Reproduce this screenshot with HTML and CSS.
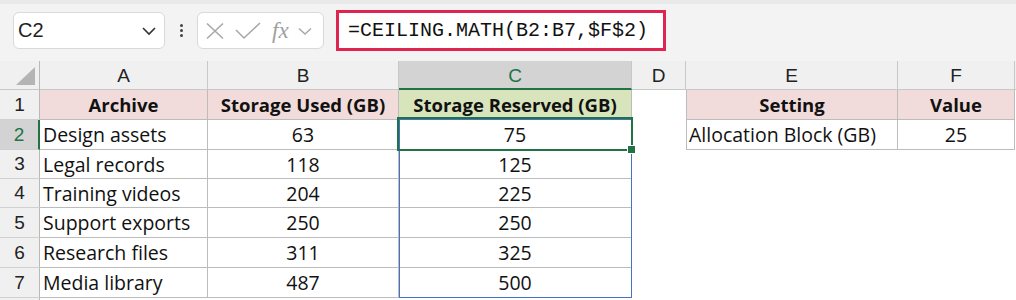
FILE: index.html
```html
<!DOCTYPE html>
<html>
<head>
<meta charset="utf-8">
<link rel="stylesheet" href="styles.css">
</head>
<body>
<div class="toolbar">
  <div class="namebox">
    <span class="ref">C2</span>
    <svg class="chev" width="16" height="10" viewBox="0 0 16 10"><path d="M2 2 L8 8 L14 2" fill="none" stroke="#333" stroke-width="1.6"/></svg>
  </div>
  <div class="dots"><i></i><i></i><i></i></div>
  <div class="fxbox">
    <svg width="20" height="18" viewBox="0 0 20 18"><path d="M2 1.5 L18 16.5 M18 1.5 L2 16.5" stroke="#a8a8a8" stroke-width="1.6" fill="none"/></svg>
    <svg width="26" height="18" viewBox="0 0 26 18"><path d="M1 8 L9 16 L25 1" stroke="#a8a8a8" stroke-width="1.6" fill="none"/></svg>
    <span class="fx">fx</span>
    <svg width="14" height="8" viewBox="0 0 14 8"><path d="M1 1.5 L7 7 L13 1.5" stroke="#a8a8a8" stroke-width="1.5" fill="none"/></svg>
  </div>
  <div class="formula">=CEILING.MATH(B2:B7,$F$2)</div>
</div>
<div class="sheet">
  <div class="corner"><span class="tri"></span></div>
  <div class="ch">A</div><div class="ch">B</div><div class="ch sel">C</div><div class="ch">D</div><div class="ch">E</div><div class="ch">F</div><div class="ch last"></div>

  <div class="rh">1</div>
  <div class="c hd pink">Archive</div><div class="c hd pink">Storage Used (GB)</div><div class="c hd green">Storage Reserved (GB)</div><div class="e"></div><div class="c hd pink eleft">Setting</div><div class="c hd pink">Value</div><div class="e"></div>

  <div class="rh sel">2</div>
  <div class="c">Design assets</div><div class="c n">63</div><div class="c n">75</div><div class="e"></div><div class="c eleft">Allocation Block (GB)</div><div class="c n">25</div><div class="e"></div>

  <div class="rh">3</div>
  <div class="c">Legal records</div><div class="c n">118</div><div class="c n">125</div><div class="e"></div><div class="e"></div><div class="e"></div><div class="e"></div>

  <div class="rh">4</div>
  <div class="c">Training videos</div><div class="c n">204</div><div class="c n">225</div><div class="e"></div><div class="e"></div><div class="e"></div><div class="e"></div>

  <div class="rh">5</div>
  <div class="c">Support exports</div><div class="c n">250</div><div class="c n">250</div><div class="e"></div><div class="e"></div><div class="e"></div><div class="e"></div>

  <div class="rh">6</div>
  <div class="c">Research files</div><div class="c n">311</div><div class="c n">325</div><div class="e"></div><div class="e"></div><div class="e"></div><div class="e"></div>

  <div class="rh">7</div>
  <div class="c">Media library</div><div class="c n">487</div><div class="c n">500</div><div class="e"></div><div class="e"></div><div class="e"></div><div class="e"></div>

  <div class="rh stub"></div>

  <div class="range"></div>
  <div class="active"><span class="handle"></span></div>
</div>
</body>
</html>
```

FILE: styles.css
```css
html, body {
  margin: 0;
  padding: 0;
  background: #ffffff;
  overflow: hidden;
}
body {
  width: 1016px;
  height: 300px;
  font-family: "Open Sans", "Liberation Sans", sans-serif;
}
.toolbar {
  height: 61px;
  box-sizing: border-box;
  background: #f3f3f3;
  border-top: 4px solid #e9e9e9;
  display: flex;
  align-items: center;
  padding-left: 13px;
}
.namebox {
  width: 152px;
  height: 37px;
  box-sizing: border-box;
  background: #fff;
  border: 1px solid #d9d9d9;
  border-radius: 6px;
  display: flex;
  align-items: center;
  justify-content: space-between;
  padding: 0 7px 0 4px;
  margin-top: -4px;
}
.ref {
  font-family: "Liberation Sans", sans-serif;
  font-size: 20px;
  color: #222;
}
.dots {
  width: 32px;
  display: flex;
  flex-direction: column;
  align-items: center;
  gap: 2px;
  margin-top: -4px;
}
.dots i {
  width: 3px;
  height: 3px;
  border-radius: 50%;
  background: #444;
  display: block;
}
.fxbox {
  width: 127px;
  height: 37px;
  box-sizing: border-box;
  background: #fff;
  border: 1px solid #d9d9d9;
  border-radius: 6px;
  display: flex;
  align-items: center;
  padding-left: 7px;
  gap: 12px;
  margin-top: -4px;
}
.fxbox svg:nth-child(2) { margin-left: -2px; }
.fx {
  font-family: "Liberation Serif", serif;
  font-style: italic;
  font-size: 23px;
  color: #a0a0a0;
  margin-left: -1px;
  margin-right: -3px;
}
.formula {
  margin-left: 12px;
  width: 330px;
  height: 41px;
  box-sizing: border-box;
  border: 3px solid #e0234f;
  background: #fff;
  font-family: "Liberation Mono", monospace;
  font-size: 20px;
  color: #111;
  display: flex;
  align-items: center;
  padding-left: 9px;
  margin-top: -4px;
}
.sheet {
  position: relative;
  display: grid;
  grid-template-columns: 40px 168px 191px 233px 54px 212px 117px 1fr;
  grid-template-rows: 29px 30px 30px 29px 29px 30px 30px 30px 3px;
  font-size: 19.5px;
  color: #111;
  height: 239px;
  overflow: hidden;
}
.corner {
  background: #f0f0f0;
  border-right: 1px solid #b9b9b9;
  border-bottom: 1px solid #c8c8c8;
  box-sizing: border-box;
  position: relative;
}
.tri {
  position: absolute;
  right: 4px;
  bottom: 4px;
  width: 0;
  height: 0;
  border-left: 19px solid transparent;
  border-bottom: 18px solid #b4b4b4;
}
.ch {
  background: #f0f0f0;
  border-right: 1px solid #c8c8c8;
  border-bottom: 1px solid #c8c8c8;
  box-sizing: border-box;
  display: flex;
  align-items: center;
  justify-content: center;
  font-family: "Liberation Sans", sans-serif;
  font-size: 19px;
  color: #222;
  padding-top: 2px;
}
.ch.last { border-right: none; }
.ch.sel {
  background: #d3d3d3;
  color: #217346;
  border-bottom: 2px solid #217346;
  padding-top: 3px;
}
.rh {
  background: #f0f0f0;
  border-right: 1px solid #b9b9b9;
  border-bottom: 1px solid #d0d0d0;
  box-sizing: border-box;
  display: flex;
  align-items: center;
  justify-content: center;
  font-family: "Liberation Sans", sans-serif;
  font-size: 19px;
  color: #222;
  grid-column: 1;
}
.rh.stub { border-bottom: none; }
.rh.sel {
  background: #d3d3d3;
  color: #217346;
  border-right: 2px solid #217346;
}
.c {
  box-sizing: border-box;
  border-right: 1px solid #bcbcbc;
  border-bottom: 1px solid #bcbcbc;
  display: flex;
  align-items: center;
  padding-left: 3px;
  white-space: nowrap;
  overflow: hidden;
}
.c.n { justify-content: center; padding-left: 0; }
.c.hd { font-weight: 700; font-size: 18.5px; justify-content: center; padding-left: 0; }
.pink { background: #f2dcdb; }
.green { background: #d8e4bc; }
.eleft { border-left: 1px solid #bcbcbc; padding-left: 2px; }
.c.hd.eleft { padding-left: 0; }
.range {
  position: absolute;
  left: 399px;
  top: 58px;
  width: 233px;
  height: 179px;
  box-sizing: border-box;
  border: 1px solid #4472c4;
  pointer-events: none;
}
.active {
  position: absolute;
  left: 397px;
  top: 56px;
  width: 236px;
  height: 34px;
  box-sizing: border-box;
  border: 2px solid #217346;
}
.handle {
  position: absolute;
  right: -5px;
  bottom: -5px;
  width: 7px;
  height: 7px;
  background: #217346;
  border: 1px solid #fff;
}
```
